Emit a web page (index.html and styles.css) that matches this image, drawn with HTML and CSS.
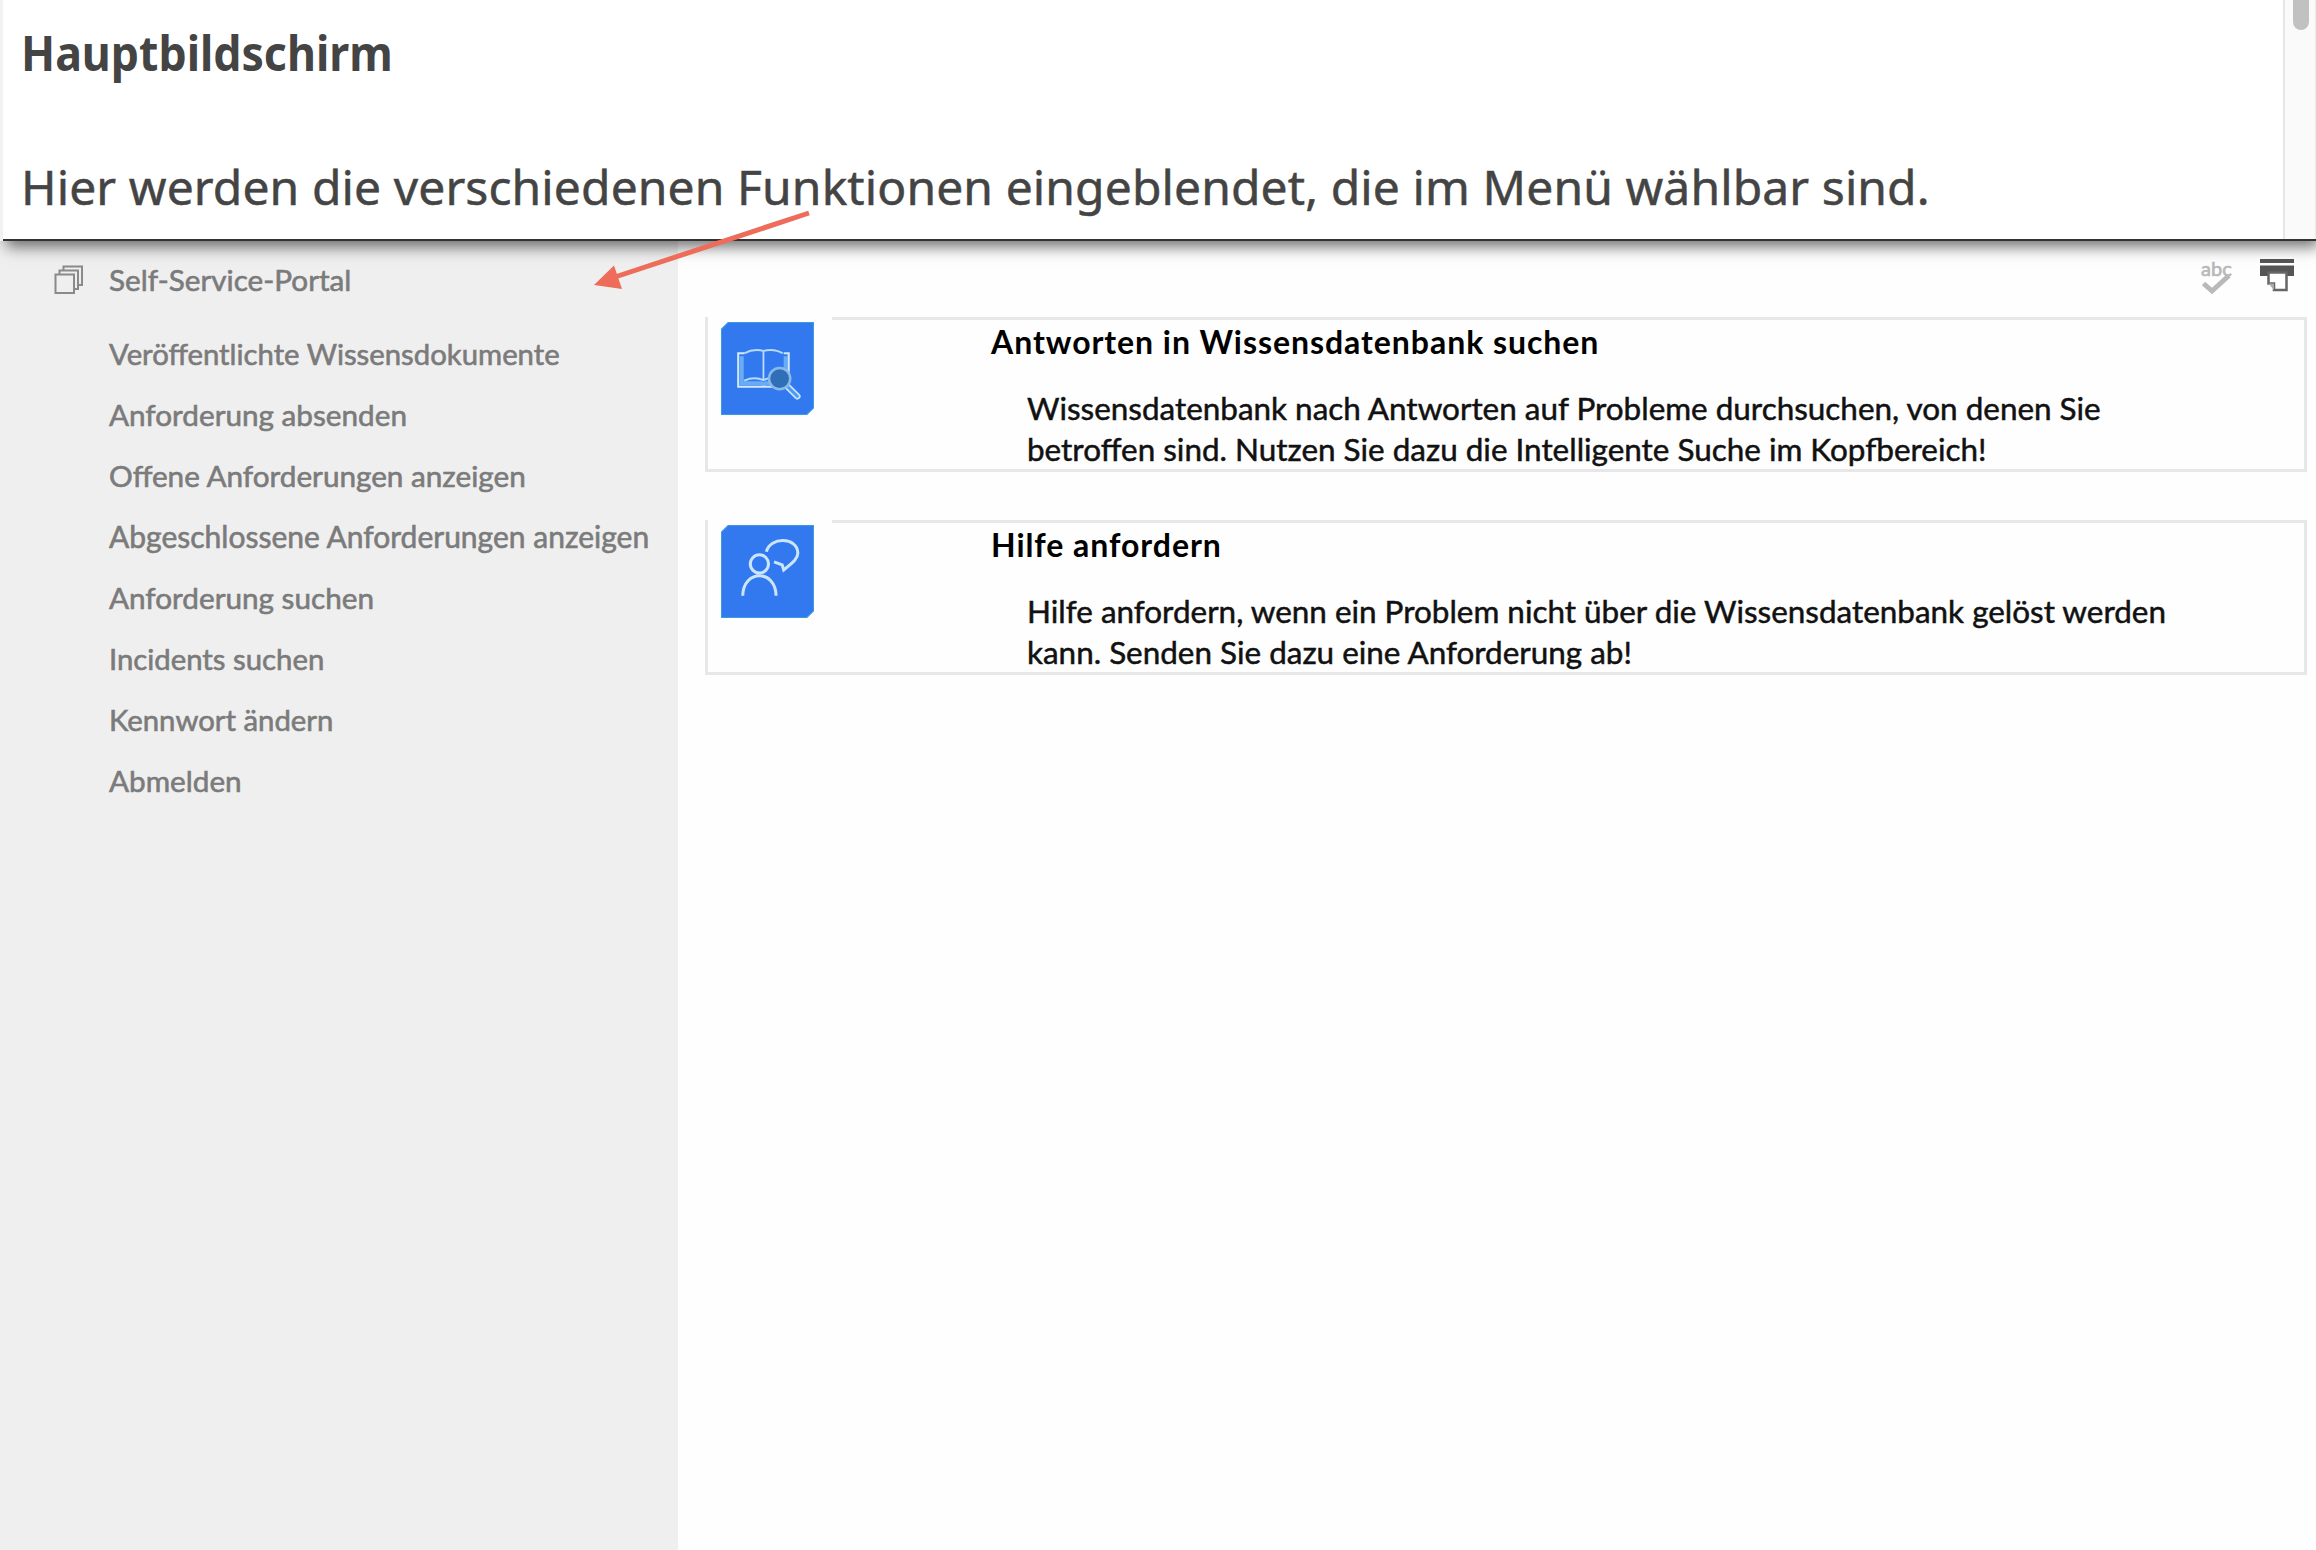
FILE: index.html
```html
<!DOCTYPE html>
<html lang="de">
<head>
<meta charset="utf-8">
<title>Self-Service-Portal</title>
<link rel="stylesheet" href="styles.css">
</head>
<body>
<header class="banner">
  <div class="banner-text">
    <h1 class="headline">Hauptbildschirm</h1>
    <p class="intro">Hier werden die verschiedenen Funktionen eingeblendet, die im Menü wählbar sind.</p>
  </div>
  <div class="scroll-track"><div class="scroll-thumb"></div></div>
</header>
<svg class="pointer" width="230" height="90" viewBox="0 0 230 90"><path d="M25 69L219 5" stroke="#ed6c5a" stroke-width="5"/><path d="M4 77L24 57.500L32 81z" fill="#ed6c5a"/></svg>
<div class="portal">
  <nav class="sidebar">
    <div class="nav-title">
      <svg width="30" height="30" viewBox="0 0 30 30" fill="#efefef" stroke="#8a8a8a" stroke-width="2"><path d="M9.500 1.500H28V20H9.500z"/><path d="M5.500 5.500H24V24H5.500z"/><path d="M1.500 9.500H20V28H1.500z"/></svg>
      <span>Self-Service-Portal</span>
    </div>
    <ul class="menu">
      <li class="snug">Veröffentlichte Wissensdokumente</li>
      <li>Anforderung absenden</li>
      <li>Offene Anforderungen anzeigen</li>
      <li class="wide">Abgeschlossene Anforderungen anzeigen</li>
      <li>Anforderung suchen</li>
      <li class="snug">Incidents suchen</li>
      <li class="snug">Kennwort ändern</li>
      <li>Abmelden</li>
    </ul>
  </nav>
  <main class="content">
    <div class="toolbar">
      <svg width="36" height="46" viewBox="0 -8 36 46"><text class="spell" x="1" y="17">abc</text><path d="M3.500 24.500L12 32L29 16.500" fill="none" stroke="#b9b9b9" stroke-width="5"/></svg>
      <svg width="36" height="46" viewBox="0 -8 36 46"><path d="M1 0H35V4H1zM1 6.500H35V17H1z" fill="#555"/><path d="M9.500 13.500H27.500V31H15V24.500H9.500z" fill="#fefefe" stroke="#666" stroke-width="2.500"/><path d="M9.500 24.500L15 31V24.500z" fill="#aaa"/></svg>
    </div>
    <section class="card">
      <div class="card-icon">
        <svg width="93" height="93" viewBox="0 0 92 92" fill="none">
          <path d="M7 .5H91.500V85L85 91.500H.5V7z" fill="#3279f0" stroke="#3b9be0"/>
          <path d="M20.500 34V60.500H40L42 62L44 60.500H64V34" stroke="#66adf6" stroke-width="4"/>
          <path d="M23 31H17V64H67V31H62" stroke="#d4e9fd" stroke-width="2"/>
          <path d="M23 31Q32 26 42 28.500Q53 26 61 31M23 58Q33 53.500 42 57.500Q50 53.500 58 57M42 28.500V57" stroke="#b9dbfb" stroke-width="1.800"/>
          <path d="M66.500 64.500L75.500 73.500" stroke="#c6e2fc" stroke-width="6.500" stroke-linecap="round"/>
          <path d="M66.500 64.500L75.500 73.500" stroke="#4b9bf4" stroke-width="3" stroke-linecap="round"/>
          <circle cx="58" cy="56" r="10.500" fill="#2e6fb8" stroke="#89b9e6" stroke-width="2.500"/>
        </svg>
      </div>
      <div class="card-body">
        <h2>Antworten in Wissensdatenbank suchen</h2>
        <p>Wissensdatenbank nach Antworten auf Probleme durchsuchen, von denen Sie<br>betroffen sind. Nutzen Sie dazu die Intelligente Suche im Kopfbereich!</p>
      </div>
    </section>
    <section class="card">
      <div class="card-icon">
        <svg width="93" height="93" viewBox="0 0 92 92" fill="none">
          <path d="M7 .5H91.500V85L85 91.500H.5V7z" fill="#3279f0" stroke="#3b9be0"/>
          <g stroke="#cbe5fd" stroke-width="3">
            <circle cx="38" cy="38.500" r="9"/>
            <path d="M21.500 70C22 43.500 54 43.500 54.500 70"/>
            <path d="M45 26.500C48 11.500 76 11.500 76 28C76 33 72 36.500 62 44.500L60.500 39.500L52.500 36.500"/>
          </g>
        </svg>
      </div>
      <div class="card-body">
        <h2>Hilfe anfordern</h2>
        <p>Hilfe anfordern, wenn ein Problem nicht über die Wissensdatenbank gelöst werden<br>kann. Senden Sie dazu eine Anforderung ab!</p>
      </div>
    </section>
  </main>
</div>
</body>
</html>
```
FILE: styles.css
```css
* { box-sizing: border-box; }
body {
  margin: 0;
  background: #fefefe;
  font-family: Lato, sans-serif;
  overflow: hidden;
}
h1, h2, p, ul { margin: 0; padding: 0; font-weight: 400; }
svg { display: block; flex: none; }

.banner {
  position: relative;
  z-index: 1;
  display: flex;
  height: 241px;
  margin-left: 3px;
  background: #fff;
  border-bottom: 2px solid #333;
  box-shadow: -3px 0 0 #f2f2f2, 3px 6px 14px rgba(0, 0, 0, .55);
  clip-path: inset(0 0 -30px -3px);
}
.banner-text {
  flex: 1;
  padding: 20px 0 0 18px;
  color: #444;
  font: 48px/64px "Noto Sans", sans-serif;
  white-space: nowrap;
}
.headline {
  width: max-content;
  margin-bottom: 71px;
  font-size: 48.500px;
  line-height: 64px;
  font-weight: 700;
  transform: scaleX(.92);
  transform-origin: 0 0;
}
.intro { letter-spacing: .1px; -webkit-text-stroke: .5px #444; }
.scroll-track {
  width: 33px;
  padding-left: 8px;
  background: #fafafa;
  border-left: 2px solid #e6e6e6;
  border-right: 1px solid #ededed;
}
.scroll-thumb {
  width: 16px;
  height: 30px;
  background: #c1c1c1;
  border-radius: 0 0 8px 8px;
}

.pointer { position: absolute; z-index: 2; left: 590px; top: 208px; }

.portal { display: flex; height: 1309px; }
.sidebar {
  width: 678px;
  padding-top: 18px;
  background: #efefef;
  color: #7b7b7b;
  font-size: 29.700px;
  -webkit-text-stroke: .6px #7b7b7b;
}
.nav-title {
  display: flex;
  align-items: flex-start;
  gap: 25px;
  height: 40px;
  margin-bottom: 24px;
  padding-left: 54px;
  font-size: 29.700px;
  line-height: 41px;
}
.nav-title svg { margin-top: 6px; }
.menu { padding-left: 109px; list-style: none; line-height: 61px; white-space: nowrap; }
.snug { font-size: 29.300px; }
.wide { font-size: 30px; }

.content { flex: 1; padding: 0 9px 0 27px; }
.toolbar {
  display: flex;
  justify-content: flex-end;
  gap: 23px;
  height: 76px;
  padding: 10px 12px 0 0;
}
.spell { font: 20px Lato, sans-serif; fill: #b9b9b9; stroke: #b9b9b9; stroke-width: .7px; }

.card {
  display: flex;
  height: 155px;
  margin-bottom: 48px;
  border: 3px solid #e7e7ea;
  border-top: 0;
}
.card-icon { width: 124px; padding: 5px 0 0 13px; }
.card-body {
  flex: 1;
  padding: 6px 0 0 159px;
  border-top: 3px solid #e7e7ea;
  color: #111;
}
.card-body h2 {
  margin-bottom: 30px;
  color: #000;
  font-size: 32px;
  font-weight: 700;
  line-height: 32px;
  letter-spacing: .95px;
}
.card-body p {
  padding-left: 36px;
  font-size: 31.450px;
  line-height: 41px;
  white-space: nowrap;
  -webkit-text-stroke: .5px #111;
}
```
